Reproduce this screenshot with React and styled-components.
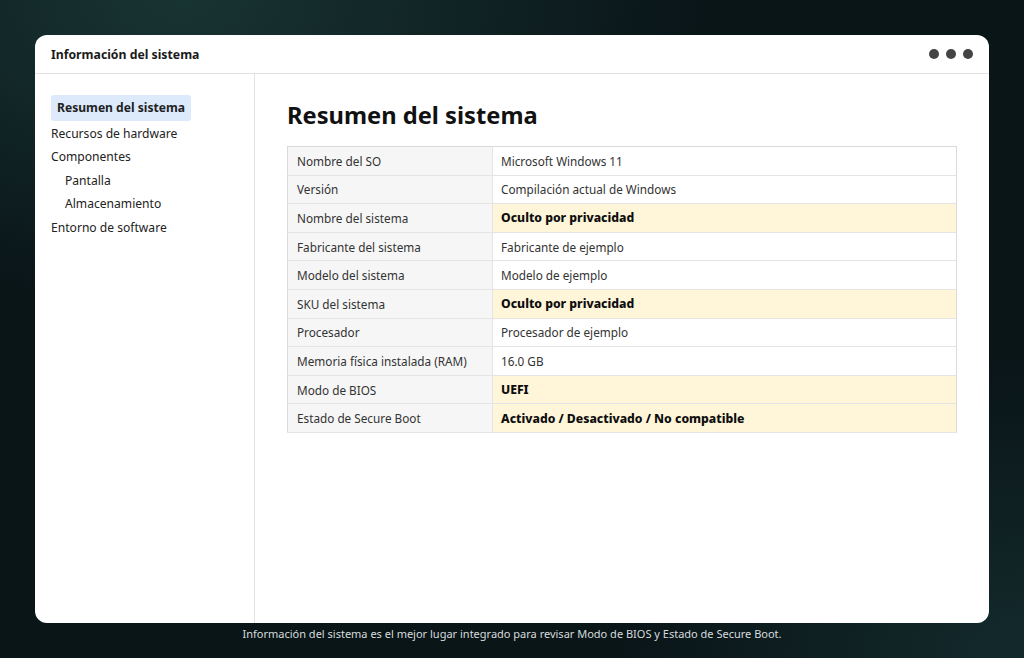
import styled, { createGlobalStyle } from 'styled-components'

const GlobalStyle = createGlobalStyle`
    html, body {
        margin: 0;
        height: 100%;
    }
    body {
        background: radial-gradient(ellipse 520px 300px at 180px 0px, #183432 0%, rgba(24,52,50,0) 100%),
            radial-gradient(ellipse 400px 300px at 1024px 658px, #132a2c 0%, rgba(19,42,44,0) 100%),
            #0a1518;
        font-family: 'Noto Sans', 'Open Sans', sans-serif;
    }
`;

const Page = styled.div`
    display: flex;
    flex-direction: column;
    align-items: stretch;
    padding: 35px 35px 0;
    height: 658px;
    box-sizing: border-box;
`;

const Window = styled.div`
    background: #ffffff;
    border-radius: 12px;
    height: 588px;
    display: flex;
    flex-direction: column;
    overflow: hidden;
`;

const TitleBar = styled.div`
    height: 38px;
    display: flex;
    align-items: center;
    justify-content: space-between;
    padding: 0 16px;
    border-bottom: 1px solid #e2e2e2;
    flex-shrink: 0;
`;

const WindowTitle = styled.div`
    font-size: 12.25px;
    font-weight: 700;
    color: #1a1a1a;
`;

const Dots = styled.div`
    display: flex;
    gap: 7px;
    span {
        width: 10px;
        height: 10px;
        border-radius: 50%;
        background: #444;
    }
`;

const Body = styled.div`
    flex: 1;
    display: flex;
`;

const Sidebar = styled.nav`
    width: 220px;
    border-right: 1px solid #e2e2e2;
    padding: 21px 16px;
    box-sizing: border-box;
    display: flex;
    flex-direction: column;
    align-items: flex-start;
`;

const NavItem = styled.div`
    font-size: 12.1px;
    color: #222;
    line-height: 23.5px;
    padding: ${p => (p.$active ? '1px 6px' : p.$sub ? '0 0 0 14px' : '0')};
    background: ${p => (p.$active ? '#dceafb' : 'transparent')};
    font-weight: ${p => (p.$active ? 700 : 400)};
    border-radius: 3px;
    margin-bottom: ${p => (p.$active ? '1px' : '0')};
`;

const Main = styled.main`
    flex: 1;
    padding: 24px 32px;
`;

const Heading = styled.h1`
    margin: 0 0 14px;
    font-size: 23.7px;
    font-weight: 700;
    color: #111;
    line-height: 34px;
`;

const Table = styled.table`
    width: 100%;
    table-layout: fixed;
    border-collapse: collapse;
    border: 1px solid #d9d9d9;
    font-size: 11.75px;
    color: #333;
`;

const Row = styled.tr`
    height: 28.6px;
    border-bottom: 1px solid #e4e4e4;
`;

const Label = styled.td`
    width: 186px;
    padding: 0 9px;
    background: #f6f6f6;
    border-right: 1px solid #e4e4e4;
    white-space: nowrap;
`;

const Value = styled.td`
    padding: 0 8px;
    background: ${p => (p.$hidden ? '#fff5d9' : '#ffffff')};
    font-weight: ${p => (p.$hidden ? 800 : 400)};
    font-size: ${p => (p.$hidden ? '12.2px' : '11.75px')};
    color: ${p => (p.$hidden ? '#0d0d0d' : '#333')};
`;

const Caption = styled.div`
    text-align: center;
    color: #d6dbdd;
    font-size: 11px;
    padding-top: 3px;
`;

const rows = [
    ['Nombre del SO', 'Microsoft Windows 11'],
    ['Versión', 'Compilación actual de Windows'],
    ['Nombre del sistema', 'Oculto por privacidad', true],
    ['Fabricante del sistema', 'Fabricante de ejemplo'],
    ['Modelo del sistema', 'Modelo de ejemplo'],
    ['SKU del sistema', 'Oculto por privacidad', true],
    ['Procesador', 'Procesador de ejemplo'],
    ['Memoria física instalada (RAM)', '16.0 GB'],
    ['Modo de BIOS', 'UEFI', true],
    ['Estado de Secure Boot', 'Activado / Desactivado / No compatible', true],
]

const App = () => {
  return (
    <>
    <GlobalStyle />
    <Page>
        <Window>
            <TitleBar>
                <WindowTitle>Información del sistema</WindowTitle>
                <Dots><span></span><span></span><span></span></Dots>
            </TitleBar>
            <Body>
                <Sidebar>
                    <NavItem $active>Resumen del sistema</NavItem>
                    <NavItem>Recursos de hardware</NavItem>
                    <NavItem>Componentes</NavItem>
                    <NavItem $sub>Pantalla</NavItem>
                    <NavItem $sub>Almacenamiento</NavItem>
                    <NavItem>Entorno de software</NavItem>
                </Sidebar>
                <Main>
                    <Heading>Resumen del sistema</Heading>
                    <Table>
                        <tbody>
                        {rows.map(([label, value, hidden]) => (
                            <Row key={label}>
                                <Label>{label}</Label>
                                <Value $hidden={hidden}>{value}</Value>
                            </Row>
                        ))}
                        </tbody>
                    </Table>
                </Main>
            </Body>
        </Window>
        <Caption>Información del sistema es el mejor lugar integrado para revisar Modo de BIOS y Estado de Secure Boot.</Caption>
    </Page>
    </>
  )
}

export default App
